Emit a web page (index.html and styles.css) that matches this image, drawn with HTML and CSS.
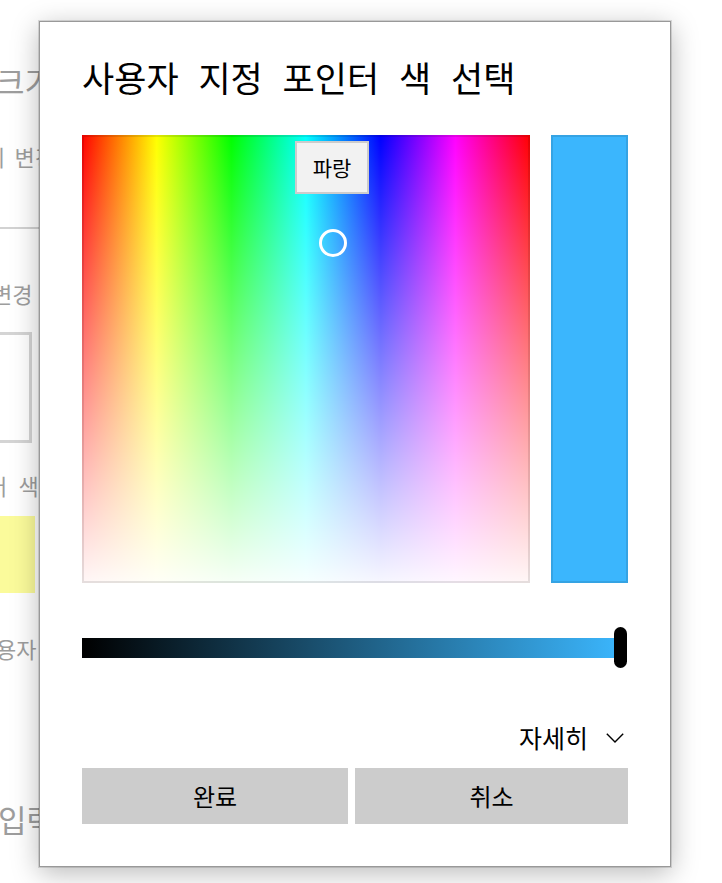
FILE: index.html
```html
<!DOCTYPE html>
<html lang="ko">
<head>
<meta charset="utf-8">
<title>사용자 지정 포인터 색 선택</title>
<link rel="stylesheet" href="styles.css">
</head>
<body>
<div class="bg">
  <div class="bg-title bg-t0">크기</div>
  <div class="bg-text bg-t1">이 변경</div>
  <div class="bg-rule"></div>
  <div class="bg-text bg-t2">변경</div>
  <div class="bg-box"></div>
  <div class="bg-text bg-t3">터 색</div>
  <div class="bg-swatch"></div>
  <div class="bg-text bg-t4">용자</div>
  <div class="bg-title bg-t5">입력</div>
</div>

<div class="dialog">
  <h1 class="title">사용자 지정 포인터 색 선택</h1>
  <div class="picker">
    <div class="spectrum">
      <div class="marker"></div>
      <div class="tip">파랑</div>
    </div>
    <div class="preview"></div>
  </div>
  <div class="slider">
    <div class="track"></div>
    <div class="thumb"></div>
  </div>
  <div class="more">
    <span class="more-label">자세히</span>
    <svg class="chevron" width="18" height="10" viewBox="0 0 18 10"><polyline points="0.8,0.8 9,9 17.2,0.8" fill="none" stroke="#000" stroke-width="1.4"/></svg>
  </div>
  <div class="actions">
    <button class="btn btn-done">완료</button>
    <button class="btn btn-cancel">취소</button>
  </div>
</div>
</body>
</html>
```

FILE: styles.css
```css
html, body {
  margin: 0;
  padding: 0;
  background: #ffffff;
}

body {
  width: 722px;
  height: 883px;
  overflow: hidden;
  position: relative;
  font-family: "Noto Sans CJK KR", "Noto Sans", sans-serif;
}

/* background page (dimmed settings) */
.bg {
  width: 722px;
  height: 883px;
  overflow: hidden;
  color: #9d9d9d;
}

.bg-title {
  font-size: 31px;
  line-height: 36px;
  white-space: nowrap;
}

.bg-text {
  font-size: 22px;
  line-height: 28px;
  white-space: nowrap;
}

.bg-t0 { margin-top: 63px; text-indent: -4px; }
.bg-t1 { margin-top: 43px; text-indent: -15px; word-spacing: 3px; }

.bg-rule {
  margin-top: 57px;
  width: 60px;
  height: 2px;
  background: #d2d2d2;
}

.bg-t2 { margin-top: 50px; text-indent: -8px; }

.bg-box {
  margin-top: 25px;
  margin-left: -28px;
  width: 60px;
  height: 111px;
  box-sizing: border-box;
  border: 3px solid #d4d4d4;
}

.bg-t3 { margin-top: 28px; text-indent: -13px; word-spacing: 5px; }

.bg-swatch {
  margin-top: 17px;
  margin-left: -45px;
  width: 80px;
  height: 77px;
  background: #fbfb9b;
}

.bg-t4 { margin-top: 41px; text-indent: -4px; }
.bg-t5 { margin-top: 139px; text-indent: -2px; }

/* dialog */
.dialog {
  position: absolute;
  left: 39px;
  top: 21px;
  width: 632px;
  box-sizing: border-box;
  background: #ffffff;
  border: 1px solid #999999;
  box-shadow: 0 0 0 1px rgba(0, 0, 0, 0.12), 0 6px 26px rgba(0, 0, 0, 0.28);
  padding: 35px 42px 42px 42px;
  color: #000000;
}

.title {
  margin: 0;
  font-size: 35px;
  line-height: 40px;
  font-weight: 400;
  word-spacing: 10px;
  white-space: nowrap;
}

.picker {
  margin-top: 38px;
  display: flex;
  gap: 21px;
  height: 448px;
}

.spectrum {
  position: relative;
  width: 448px;
  height: 448px;
  box-sizing: border-box;
  border: 2px solid rgba(0, 0, 0, 0.1);
  background-origin: border-box;
  background-image:
    linear-gradient(to bottom, rgba(255, 255, 255, 0) 0%, rgba(255, 255, 255, 0.97) 100%),
    linear-gradient(to right, #ff0000 0%, #ffff00 16.67%, #00ff00 33.33%, #00ffff 50%, #0000ff 66.67%, #ff00ff 83.33%, #ff0000 100%);
}

.marker {
  position: absolute;
  left: 235px;
  top: 92px;
  width: 28px;
  height: 28px;
  box-sizing: border-box;
  border: 3px solid #ffffff;
  border-radius: 50%;
}

.tip {
  position: absolute;
  left: 211px;
  top: 4px;
  width: 74px;
  height: 53px;
  box-sizing: border-box;
  border: 2px solid #cccccc;
  background: #f2f2f2;
  font-size: 21px;
  line-height: 49px;
  text-align: center;
  color: #000000;
}

.preview {
  width: 77px;
  height: 448px;
  box-sizing: border-box;
  border: 2px solid rgba(0, 0, 0, 0.1);
  background-color: #3bb6fd;
}

.slider {
  position: relative;
  margin-top: 44px;
  height: 41px;
  display: flex;
  align-items: center;
}

.track {
  width: 539px;
  height: 20px;
  background: linear-gradient(to right, #000000, #3bb6fd);
}

.thumb {
  position: absolute;
  right: 1px;
  top: 0;
  width: 13px;
  height: 41px;
  border-radius: 7px;
  background: #000000;
}

.more {
  margin-top: 54px;
  height: 30px;
  display: flex;
  justify-content: flex-end;
  align-items: center;
  gap: 18px;
  padding-right: 4px;
}

.more-label {
  font-size: 25px;
  line-height: 30px;
}

.chevron {
  display: block;
  margin-top: 1px;
}

.actions {
  margin-top: 16px;
  display: flex;
  gap: 7px;
}

.btn {
  height: 56px;
  border: none;
  margin: 0;
  padding: 0;
  background: #cccccc;
  color: #000000;
  font-family: "Noto Sans CJK KR", "Noto Sans", sans-serif;
  font-size: 24px;
  line-height: 56px;
}

.btn-done {
  width: 266px;
}

.btn-cancel {
  flex: 1;
}
```
